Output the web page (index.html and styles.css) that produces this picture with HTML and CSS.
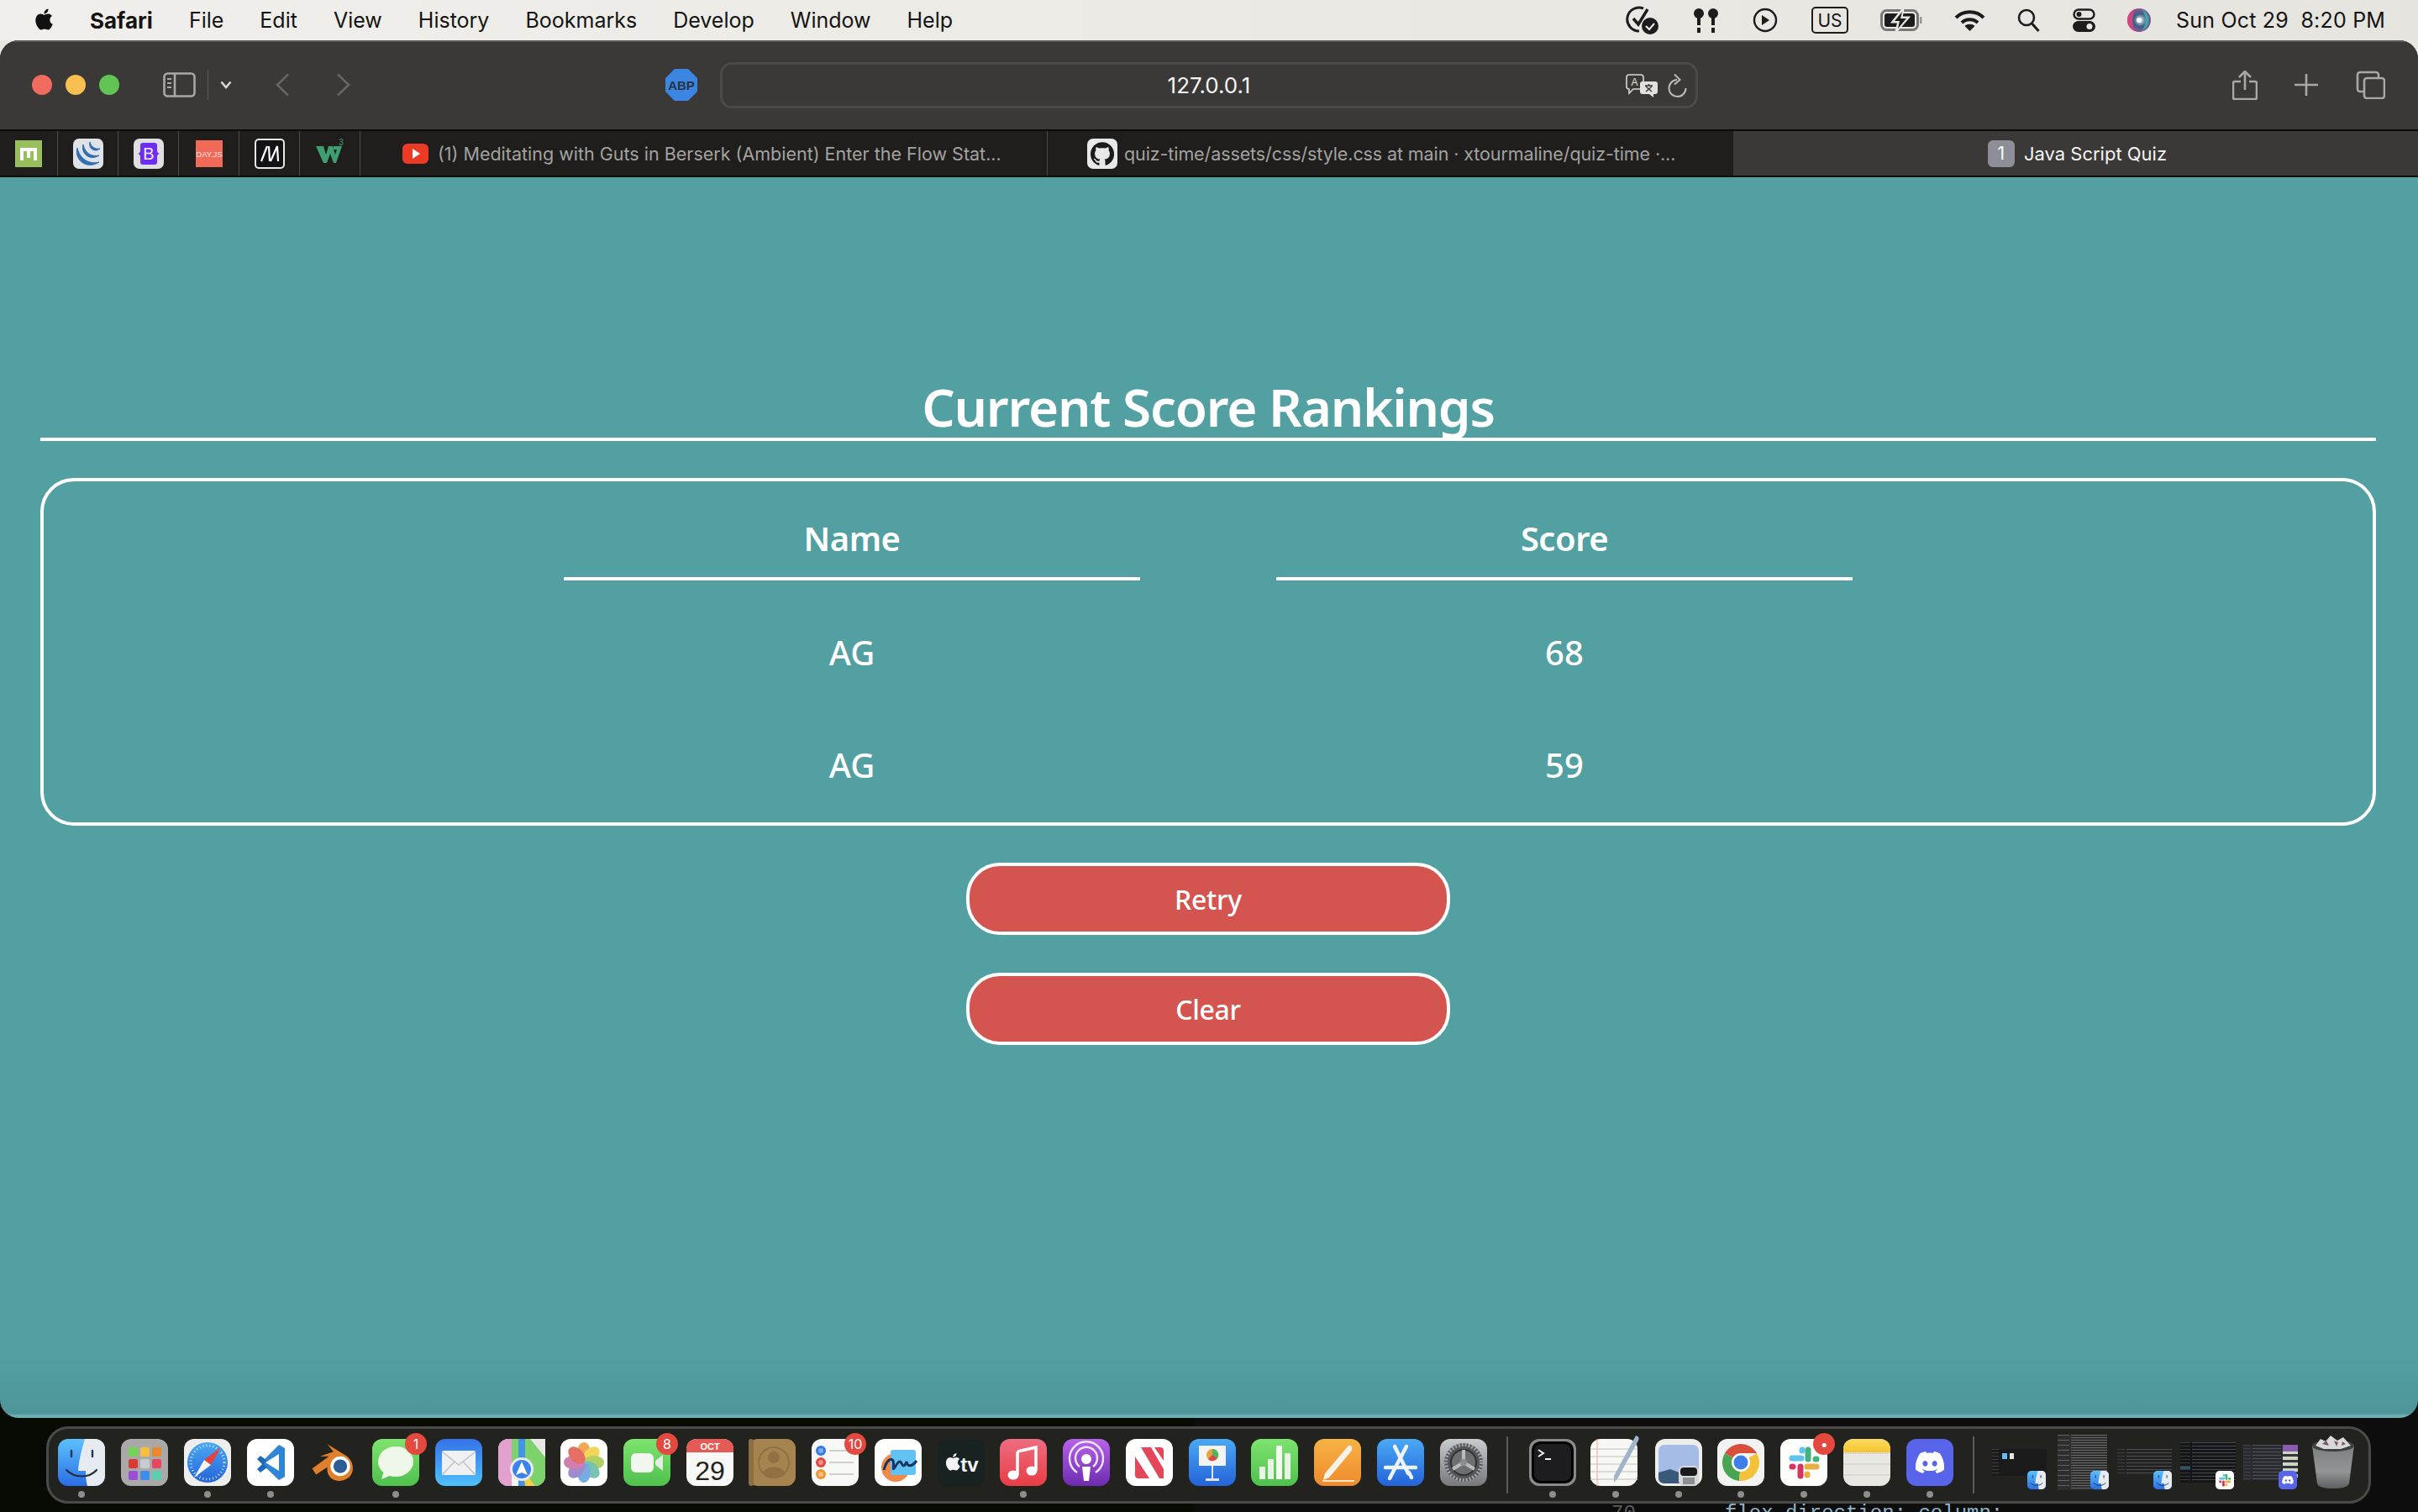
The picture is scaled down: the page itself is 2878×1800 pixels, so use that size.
FILE: index.html
```html
<!DOCTYPE html>
<html lang="en">
<head>
    <meta charset="UTF-8">
    <title>Java Script Quiz</title>
    <link rel="stylesheet" href="styles.css">
</head>
<body>
    <!-- shared icons -->
    <svg class="sprites" xmlns="http://www.w3.org/2000/svg">
        <defs>
            <linearGradient id="gFinder" x1="0" y1="0" x2="0" y2="1"><stop offset="0" stop-color="#5cc1fb"/><stop offset="1" stop-color="#2a6ee6"/></linearGradient>
            <linearGradient id="gBlue" x1="0" y1="0" x2="0" y2="1"><stop offset="0" stop-color="#4aa9f5"/><stop offset="1" stop-color="#2463d8"/></linearGradient>
            <linearGradient id="gGreen" x1="0" y1="0" x2="0" y2="1"><stop offset="0" stop-color="#7ee36f"/><stop offset="1" stop-color="#4fc14d"/></linearGradient>
            <linearGradient id="gMail" x1="0" y1="0" x2="0" y2="1"><stop offset="0" stop-color="#3572e8"/><stop offset="1" stop-color="#4fc0fb"/></linearGradient>
            <linearGradient id="gMusic" x1="0" y1="0" x2="0" y2="1"><stop offset="0" stop-color="#ee6d80"/><stop offset="1" stop-color="#e83d45"/></linearGradient>
            <linearGradient id="gPod" x1="0" y1="0" x2="0" y2="1"><stop offset="0" stop-color="#b664ea"/><stop offset="1" stop-color="#6d2bb0"/></linearGradient>
            <linearGradient id="gPages" x1="0" y1="0" x2="0" y2="1"><stop offset="0" stop-color="#f7b344"/><stop offset="1" stop-color="#ef8a2e"/></linearGradient>
            <linearGradient id="gGear" x1="0" y1="0" x2="0" y2="1"><stop offset="0" stop-color="#c9cccf"/><stop offset="1" stop-color="#77797c"/></linearGradient>
            <linearGradient id="gTrash" x1="0" y1="0" x2="0" y2="1"><stop offset="0" stop-color="#7d7e7f"/><stop offset=".6" stop-color="#949596"/><stop offset="1" stop-color="#5e5f60"/></linearGradient>
            <linearGradient id="gNotes" x1="0" y1="0" x2="0" y2="1"><stop offset="0" stop-color="#fbdc5f"/><stop offset="1" stop-color="#f7c431"/></linearGradient>
            <radialGradient id="gSiri" cx=".55" cy=".5" r=".6"><stop offset="0" stop-color="#e8f2f5"/><stop offset=".45" stop-color="#3d5f86"/><stop offset="1" stop-color="#b94d96"/></radialGradient>
            <symbol id="apple" viewBox="0 0 24 24"><path d="M12.152 6.896c-.948 0-2.415-1.078-3.96-1.040-2.040.027-3.910 1.183-4.961 3.014-2.117 3.675-.546 9.103 1.519 12.090 1.013 1.454 2.208 3.090 3.792 3.039 1.520-.065 2.090-.987 3.935-.987 1.831 0 2.350.987 3.960.948 1.637-.026 2.676-1.480 3.676-2.948 1.156-1.688 1.636-3.325 1.662-3.415-.039-.013-3.182-1.221-3.220-4.857-.026-3.040 2.480-4.494 2.597-4.559-1.429-2.090-3.623-2.324-4.390-2.376-2-.156-3.675 1.090-4.610 1.090zM15.530 3.830c.843-1.012 1.400-2.427 1.245-3.830-1.207.052-2.662.805-3.532 1.818-.78.896-1.454 2.338-1.273 3.714 1.338.104 2.715-.688 3.559-1.701"/></symbol>
            <symbol id="finder" viewBox="0 0 56 56">
                <rect width="56" height="56" rx="12" fill="url(#gFinder)"/>
                <path d="M32 0H44a12 12 0 0 1 12 12V44a12 12 0 0 1-12 12H35C33 48 33 42 33 38H24C25 24 29 10 32 0Z" fill="#e6ebf2"/>
                <path d="M16 14v7M41 14v7" stroke="#26364e" stroke-width="2.400" stroke-linecap="round"/>
                <path d="M10 37C20 47 37 47 46 37" stroke="#1f2c40" stroke-width="2.200" fill="none" stroke-linecap="round"/>
            </symbol>
            <symbol id="slack" viewBox="0 0 56 56">
                <rect width="56" height="56" rx="12" fill="#fdfdfc"/>
                <g fill="none" stroke-width="7" stroke-linecap="round">
                    <path d="M14 23H25" stroke="#5fc3ea"/><path d="M26 13v1" stroke="#5fc3ea"/>
                    <path d="M33 13V24" stroke="#44b27f"/><path d="M43 24h-1" stroke="#44b27f"/>
                    <path d="M32 33H43" stroke="#e5b03f"/><path d="M32 43v-1" stroke="#e5b03f"/>
                    <path d="M24 33V44" stroke="#d9345f"/><path d="M14 33h1" stroke="#d9345f"/>
                </g>
            </symbol>
            <symbol id="discord" viewBox="0 0 56 56">
                <rect width="56" height="56" rx="12" fill="#5865ea"/>
                <g transform="translate(11 11) scale(1.420)"><path fill="#fff" d="M20.317 4.3698a19.7913 19.7913 0 00-4.8851-1.5152.0741.0741 0 00-.0785.0371c-.211.3753-.4447.8648-.6083 1.2495-1.8447-.2762-3.68-.2762-5.4868 0-.1636-.3933-.4058-.8742-.6177-1.2495a.077.077 0 00-.0785-.037 19.7363 19.7363 0 00-4.8852 1.515.0699.0699 0 00-.0321.0277C.5334 9.0458-.319 13.5799.0992 18.0578a.0824.0824 0 00.0312.0561c2.0528 1.5076 4.0413 2.4228 5.9929 3.0294a.0777.0777 0 00.0842-.0276c.4616-.6304.8731-1.2952 1.226-1.9942a.076.076 0 00-.0416-.1057c-.6528-.2476-1.2743-.5495-1.8722-.8923a.077.077 0 01-.0076-.1277c.1258-.0943.2517-.1923.3718-.2914a.0743.0743 0 01.0776-.0105c3.9278 1.7933 8.18 1.7933 12.0614 0a.0739.0739 0 01.0785.0095c.1202.099.246.1981.3728.2924a.077.077 0 01-.0066.1276 12.2986 12.2986 0 01-1.873.8914.0766.0766 0 00-.0407.1067c.3604.698.7719 1.3628 1.225 1.9932a.076.076 0 00.0842.0286c1.961-.6067 3.9495-1.5219 6.0023-3.0294a.077.077 0 00.0313-.0552c.5004-5.177-.8382-9.6739-3.5485-13.6604a.061.061 0 00-.0312-.0286zM8.02 15.3312c-1.1825 0-2.1569-1.0857-2.1569-2.419 0-1.3332.9555-2.4189 2.157-2.4189 1.2108 0 2.1757 1.0952 2.1568 2.419 0 1.3332-.9555 2.4189-2.1569 2.4189zm7.9748 0c-1.1825 0-2.1569-1.0857-2.1569-2.419 0-1.3332.9554-2.4189 2.1569-2.4189 1.2108 0 2.1757 1.0952 2.1568 2.419 0 1.3332-.946 2.4189-2.1568 2.4189Z"/></g>
            </symbol>
        </defs>
    </svg>

    <header class="menubar">
        <svg class="apple-logo" width="25" height="30"><use href="#apple"/></svg>
        <nav class="menu-items">
            <span class="menu-app">Safari</span>
            <span>File</span>
            <span>Edit</span>
            <span>View</span>
            <span>History</span>
            <span>Bookmarks</span>
            <span>Develop</span>
            <span>Window</span>
            <span>Help</span>
        </nav>
        <div class="status-items">
            <svg width="43" height="36" viewBox="0 0 43 36" fill="none" stroke="#1c1c1c" stroke-width="3"><path d="M22 4A14 14 0 1 0 17 31"/><path d="M10 16l6 7L27 5" stroke-width="3.500"/><circle cx="30" cy="25" r="10" fill="#1c1c1c" stroke="none"/><path d="M25 25l4 4 6-7" stroke="#eee" stroke-width="2"/></svg>
            <svg width="33" height="32" viewBox="0 0 33 32" fill="#1c1c1c"><circle cx="7" cy="8" r="6"/><circle cx="24" cy="8" r="6"/><rect x="5" y="12" width="4" height="10"/><rect x="22" y="12" width="4" height="10"/><rect x="5" y="25" width="4" height="6"/><rect x="22" y="25" width="4" height="6"/></svg>
            <svg width="32" height="30" viewBox="0 0 32 30" fill="none"><circle cx="15" cy="15" r="13" stroke="#1c1c1c" stroke-width="2.400"/><path d="M11 9l9 6-9 6Z" fill="#1c1c1c"/></svg>
            <span class="input-box">US</span>
            <svg width="50" height="26" viewBox="0 0 50 26"><rect x="1.500" y="1.500" width="43" height="23" rx="6" fill="none" stroke="#777" stroke-width="3"/><rect x="5" y="5" width="36" height="16" rx="3" fill="#1c1c1c"/><rect x="47" y="9" width="2.500" height="8" fill="#999"/><path d="M27 0L15 15h7l-3 11L33 10h-8Z" fill="#e9e7e2" stroke="#e9e7e2" stroke-width="3"/><path d="M26 3L17 14h6l-2 9L31 11h-7Z" fill="#1c1c1c"/></svg>
            <svg width="37" height="26" viewBox="0 0 37 26" fill="none" stroke="#1c1c1c" stroke-width="4"><path d="M2 10C11 1 26 1 35 10"/><path d="M9 16C14 11 23 11 28 16"/><path d="M18.500 26l-6-6C15 17 22 17 24.500 20Z" fill="#1c1c1c" stroke="none"/></svg>
            <svg width="28" height="28" viewBox="0 0 28 28" fill="none" stroke="#1c1c1c" stroke-width="2.600"><circle cx="11" cy="11" r="9"/><path d="M17.500 18l8 9" stroke-width="3"/></svg>
            <svg width="27" height="28" viewBox="0 0 27 28"><rect x="1.500" y="1.500" width="24" height="11" rx="5.500" fill="none" stroke="#1c1c1c" stroke-width="2.400"/><circle cx="7.500" cy="7" r="3" fill="#1c1c1c"/><rect y="15" width="27" height="13" rx="6.500" fill="#1c1c1c"/><circle cx="20" cy="21.500" r="3.500" fill="#e9e7e2"/></svg>
            <svg width="28" height="28" viewBox="0 0 28 28"><circle cx="14" cy="14" r="14" fill="url(#gSiri)"/><path d="M0 14A14 14 0 0 0 9 27C5 20 5 8 9 1A14 14 0 0 0 0 14Z" fill="#d2457f"/><path d="M17 1C23 8 23 20 17 27A14 14 0 0 0 17 1Z" fill="#3ea5a8"/><circle cx="14" cy="14" r="3" fill="#fff"/></svg>
            <span class="clock">Sun Oct 29&nbsp; 8:20 PM</span>
        </div>
    </header>

    <div class="window">
        <div class="toolbar">
            <div class="lights">
                <i class="light light-red"></i>
                <i class="light light-yellow"></i>
                <i class="light light-green"></i>
            </div>
            <svg class="tool-sidebar" width="39" height="30" viewBox="0 0 39 30" fill="none" stroke="#a9a8a6" stroke-width="2.600"><rect x="1.500" y="1.500" width="36" height="27" rx="4"/><path d="M14 2v26"/><path d="M5 8h5M5 13h5M5 18h5" stroke-width="2"/></svg>
            <i class="tool-divider"></i>
            <svg class="tool-chevron" width="14" height="10" viewBox="0 0 14 10" fill="none" stroke="#d8d7d5" stroke-width="2.600"><path d="M1.500 1.500L7 8l5.500-6.500"/></svg>
            <svg class="tool-back" width="17" height="28" viewBox="0 0 17 28" fill="none" stroke="#666563" stroke-width="2.600"><path d="M15 1.500L2 14l13 12.500"/></svg>
            <svg class="tool-forward" width="17" height="28" viewBox="0 0 17 28" fill="none" stroke="#666563" stroke-width="2.600"><path d="M2 1.500L15 14 2 26.500"/></svg>
            <svg class="tool-abp" width="38" height="38" viewBox="0 0 38 38"><path d="M11 0H27L38 11V27L27 38H11L0 27V11Z" fill="#3b86e2"/><text x="19" y="25" text-anchor="middle" class="abp-text">ABP</text></svg>
            <div class="url-bar">
                <span class="url-text">127.0.0.1</span>
                <svg class="url-translate" width="38" height="28" viewBox="0 0 38 28"><path d="M4 1H18a3 3 0 0 1 3 3V15a3 3 0 0 1-3 3H9L4 23V18a3 3 0 0 1-3-3V4a3 3 0 0 1 3-3Z" fill="#3a3937" stroke="#d8d7d5" stroke-width="1.600"/><text x="10.500" y="14" text-anchor="middle" class="translate-a">A</text><path d="M20 9H35a3 3 0 0 1 3 3V21a3 3 0 0 1-3 3H33V28L28 24H20a3 3 0 0 1-3-3V12a3 3 0 0 1 3-3Z" fill="#e2e1df"/><path d="M23 14h9M27.500 12v2M24 21l7-6M31 21l-7-6" stroke="#333" stroke-width="1.400"/></svg>
                <svg class="url-reload" width="24" height="30" viewBox="0 0 24 30" fill="none" stroke="#bdbcba" stroke-width="2"><path d="M11 8A10 10 0 1 0 21.500 18"/><path d="M8 1.500L14.500 8 8 13.500"/></svg>
            </div>
            <svg class="tool-share" width="30" height="35" viewBox="0 0 30 35" fill="none" stroke="#a9a8a6" stroke-width="2.600"><path d="M15 1v22M8 8l7-7 7 7"/><path d="M10 13H3a2 2 0 0 0-2 2v17a2 2 0 0 0 2 2h24a2 2 0 0 0 2-2V15a2 2 0 0 0-2-2h-7"/></svg>
            <svg class="tool-plus" width="28" height="26" viewBox="0 0 28 26" stroke="#a9a8a6" stroke-width="2.600"><path d="M14 0v26M0 13h28"/></svg>
            <svg class="tool-tabs" width="35" height="34" viewBox="0 0 35 34" fill="none" stroke="#a9a8a6" stroke-width="2.600"><path d="M27 8V5a3 3 0 0 0-3-3H5a3 3 0 0 0-3 3v17a3 3 0 0 0 3 3h4"/><rect x="10" y="9" width="24" height="24" rx="3"/></svg>
        </div>

        <div class="tabbar">
            <div class="pinned">
                <svg width="32" height="32" viewBox="0 0 32 32"><rect width="32" height="32" fill="#97bf5b"/><path d="M6 24V9H26V24H22V13H18V21H14V13H10V24Z" fill="#fff"/></svg>
            </div>
            <div class="pinned">
                <svg width="36" height="36" viewBox="0 0 36 36"><rect width="36" height="36" rx="7" fill="#dfe2e6"/><path d="M5 11C1 24 15 38 31 28C20 31 8 25 5 11ZM12 7C9 18 20 27 31 20C23 22 14 18 12 7ZM20 4C18 12 26 17 32 12C27 13 21 10 20 4Z" fill="#2f6fb2" stroke="#2f6fb2" stroke-width="1"/></svg>
            </div>
            <div class="pinned">
                <svg width="36" height="36" viewBox="0 0 36 36"><rect width="36" height="36" rx="7" fill="#dfdfe1"/><path d="M11 5H25a3 3 0 0 1 3 3V14C28 16 29 17.500 31 18C29 18.500 28 20 28 22V28a3 3 0 0 1-3 3H11a3 3 0 0 1-3-3V22C8 20 7 18.500 5 18C7 17.500 8 16 8 14V8a3 3 0 0 1 3-3Z" fill="#6f2cf3"/><text x="18" y="25" text-anchor="middle" class="boot-text">B</text></svg>
            </div>
            <div class="pinned">
                <svg width="32" height="32" viewBox="0 0 32 32"><rect width="32" height="32" fill="#f16a58"/><text x="16" y="19.500" text-anchor="middle" class="day-text">DAY.JS</text></svg>
            </div>
            <div class="pinned">
                <svg width="36" height="36" viewBox="0 0 36 36"><rect width="36" height="36" rx="5" fill="#e8e8e8"/><rect x="2" y="2" width="32" height="32" rx="3" fill="#131316"/><path d="M8 27L15 9M17 9L18 27M19 27L27 9L28 27" fill="none" stroke="#fff" stroke-width="2.200"/></svg>
            </div>
            <div class="pinned">
                <svg width="36" height="36" viewBox="0 0 36 36"><path d="M1 9H10L13 19L16 9H21L24 19L26 13H22V9H32L25 29H22L18 18L14 29H10Z" fill="#3f9e70"/><text x="31" y="8" text-anchor="middle" class="w3-text">3</text></svg>
            </div>
            <div class="tab tab-youtube">
                <svg width="31" height="24" viewBox="0 0 31 24"><rect width="31" height="24" rx="6" fill="#ec3b24"/><path d="M12 6l9 6-9 6Z" fill="#fff"/></svg>
                <span>(1) Meditating with Guts in Berserk (Ambient) Enter the Flow Stat...</span>
            </div>
            <div class="tab tab-github">
                <svg width="36" height="36" viewBox="0 0 36 36"><rect width="36" height="36" rx="7" fill="#e8e8e8"/><g transform="translate(4 4) scale(1.170)"><path fill="#1b1b1b" d="M12 .297c-6.630 0-12 5.373-12 12 0 5.303 3.438 9.800 8.205 11.385.6.113.82-.258.82-.577 0-.285-.01-1.040-.015-2.040-3.338.724-4.042-1.610-4.042-1.610C4.422 18.070 3.633 17.700 3.633 17.700c-1.087-.744.084-.729.084-.729 1.205.084 1.838 1.236 1.838 1.236 1.070 1.835 2.809 1.305 3.495.998.108-.776.417-1.305.76-1.605-2.665-.3-5.466-1.332-5.466-5.930 0-1.310.465-2.380 1.235-3.220-.135-.303-.54-1.523.105-3.176 0 0 1.005-.322 3.300 1.230.96-.267 1.980-.399 3-.405 1.020.006 2.040.138 3 .405 2.280-1.552 3.285-1.230 3.285-1.230.645 1.653.24 2.873.12 3.176.765.84 1.230 1.910 1.230 3.220 0 4.610-2.805 5.625-5.475 5.920.42.36.81 1.096.81 2.220 0 1.606-.015 2.896-.015 3.286 0 .315.21.69.825.57C20.565 22.092 24 17.592 24 12.297c0-6.627-5.373-12-12-12"/></g></svg>
                <span class="tab-title-tight">quiz-time/assets/css/style.css at main · xtourmaline/quiz-time ·...</span>
            </div>
            <div class="tab tab-active">
                <span class="tab-number">1</span>
                <span>Java Script Quiz</span>
            </div>
        </div>

        <main class="page">
            <h1 class="page-title">Current Score Rankings</h1>
            <section class="score-box">
                <table class="score-table">
                    <thead>
                        <tr>
                            <th>Name</th>
                            <th>Score</th>
                        </tr>
                    </thead>
                    <tbody>
                        <tr>
                            <td>AG</td>
                            <td>68</td>
                        </tr>
                        <tr>
                            <td>AG</td>
                            <td>59</td>
                        </tr>
                    </tbody>
                </table>
            </section>
            <button class="action-button">Retry</button>
            <button class="action-button">Clear</button>
        </main>
    </div>

    <div class="code-behind"><span class="code-num">70</span><span class="code-line">flex-direction: column;</span></div>

    <footer class="dock">
        <div class="dock-item"><svg width="56" height="56"><use href="#finder"/></svg><i class="dot"></i></div>
        <div class="dock-item">
            <svg width="56" height="56" viewBox="0 0 56 56"><rect width="56" height="56" rx="12" fill="#aaa9a8"/><rect x="9" y="10" width="11" height="11" rx="2" fill="#72d653"/><rect x="23" y="10" width="11" height="11" rx="2" fill="#f7bd3c"/><rect x="37" y="10" width="11" height="11" rx="2" fill="#e8882f"/><rect x="9" y="24" width="11" height="11" rx="2" fill="#d93b33"/><rect x="23" y="24" width="11" height="11" rx="2" fill="#c7cccf"/><rect x="37" y="24" width="11" height="11" rx="2" fill="#e8455e"/><rect x="9" y="38" width="11" height="11" rx="2" fill="#9a4fd8"/><rect x="23" y="38" width="11" height="11" rx="2" fill="#3d8cf0"/><rect x="37" y="38" width="11" height="11" rx="2" fill="#5cd0ae"/></svg>
        </div>
        <div class="dock-item">
            <svg width="56" height="56" viewBox="0 0 56 56"><rect width="56" height="56" rx="12" fill="#eeeeee"/><circle cx="28" cy="28" r="24" fill="url(#gBlue)"/><circle cx="28" cy="28" r="20" fill="none" stroke="#d5e6fa" stroke-width="3" stroke-dasharray="1 3"/><path d="M44 10L24 25l8 6Z" fill="#e8423a"/><path d="M12 46l12-21 8 6Z" fill="#f4f4f4"/></svg>
            <i class="dot"></i>
        </div>
        <div class="dock-item">
            <svg width="56" height="56" viewBox="0 0 56 56"><rect width="56" height="56" rx="12" fill="#fff"/><path d="M38 7L45 11V45L38 49L18 30L20 25Z" fill="#2f86d6"/><path d="M38 18V38L22 28Z" fill="#fff"/><path d="M12 24L16 20L24 26L20 30L24 34 L16 40L12 36L18 30Z" fill="#1f6ab8"/></svg>
            <i class="dot"></i>
        </div>
        <div class="dock-item">
            <svg width="56" height="56" viewBox="0 0 62 56"><path d="M4 36L26 20H14L32 14L24 4L50 20C62 30 60 50 42 52C30 54 22 44 24 34L9 44Z" fill="#e17f2b"/><circle cx="41" cy="33" r="13" fill="#fff"/><circle cx="41" cy="33" r="9" fill="#2f5c94"/></svg>
        </div>
        <div class="dock-item">
            <svg width="56" height="56" viewBox="0 0 56 56"><rect width="56" height="56" rx="12" fill="url(#gGreen)"/><ellipse cx="28" cy="27" rx="21" ry="18" fill="#eef7e8"/><path d="M14 38L11 48L23 43Z" fill="#eef7e8"/></svg>
            <i class="dot"></i>
            <b class="badge">1</b>
        </div>
        <div class="dock-item">
            <svg width="56" height="56" viewBox="0 0 56 56"><rect width="56" height="56" rx="12" fill="url(#gMail)"/><rect x="8" y="14" width="40" height="29" rx="2" fill="#eff0f2"/><path d="M8 15L28 31 48 15M8 43L23 27M48 43L33 27" fill="none" stroke="#bfc3c9" stroke-width="1.400"/></svg>
        </div>
        <div class="dock-item">
            <svg width="56" height="56" viewBox="0 0 56 56"><rect width="56" height="56" rx="12" fill="#f3f3f0"/><path d="M0 12A12 12 0 0 1 12 0H16V56H12A12 12 0 0 1 0 44Z" fill="#e2a0cf"/><path d="M16 0H56V44A12 12 0 0 1 44 56H34L16 40Z" fill="#7ed26c"/><path d="M38 0H56V22Z" fill="#e7e7e4"/><path d="M24 0H32V56H24Z" fill="#4294ea"/><path d="M30 38L44 56H32Z" fill="#f6cf43"/><circle cx="28" cy="36" r="14" fill="#e9ebef"/><circle cx="28" cy="36" r="11" fill="#3b83ec"/><path d="M28 27L35 43L28 40L21 43Z" fill="#fff"/></svg>
        </div>
        <div class="dock-item">
            <svg width="56" height="56" viewBox="0 0 56 56"><rect width="56" height="56" rx="12" fill="#fff"/><g opacity=".85"><ellipse cx="28" cy="16" rx="8" ry="12" fill="#f09b37"/><ellipse cx="28" cy="16" rx="8" ry="12" fill="#f3cd3d" transform="rotate(45 28 28)"/><ellipse cx="28" cy="16" rx="8" ry="12" fill="#a5c74b" transform="rotate(90 28 28)"/><ellipse cx="28" cy="16" rx="8" ry="12" fill="#61b8a5" transform="rotate(135 28 28)"/><ellipse cx="28" cy="16" rx="8" ry="12" fill="#5e9fdc" transform="rotate(180 28 28)"/><ellipse cx="28" cy="16" rx="8" ry="12" fill="#8e78c6" transform="rotate(225 28 28)"/><ellipse cx="28" cy="16" rx="8" ry="12" fill="#c9679f" transform="rotate(270 28 28)"/><ellipse cx="28" cy="16" rx="8" ry="12" fill="#e2574b" transform="rotate(315 28 28)"/></g></svg>
        </div>
        <div class="dock-item">
            <svg width="56" height="56" viewBox="0 0 56 56"><rect width="56" height="56" rx="12" fill="url(#gGreen)"/><rect x="9" y="17" width="27" height="23" rx="6" fill="#f1f6ee"/><path d="M38 26L47 19V38L38 31Z" fill="#e4efdf"/></svg>
            <b class="badge">8</b>
        </div>
        <div class="dock-item">
            <svg width="56" height="56" viewBox="0 0 56 56"><rect width="56" height="56" rx="12" fill="#f8f8f6"/><path d="M0 16V12A12 12 0 0 1 12 0H44A12 12 0 0 1 56 12V16Z" fill="#e35b54"/><text x="28" y="13" text-anchor="middle" class="cal-month">OCT</text><text x="28" y="49" text-anchor="middle" class="cal-day">29</text></svg>
        </div>
        <div class="dock-item">
            <svg width="56" height="56" viewBox="0 0 56 56"><rect width="56" height="56" rx="11" fill="#a5844f"/><rect x="0" y="0" width="6" height="56" rx="3" fill="#8d6f42"/><circle cx="30" cy="28" r="18" fill="none" stroke="#8f7144" stroke-width="2"/><circle cx="30" cy="22" r="7" fill="#8f7144"/><path d="M17 41C19 31 41 31 43 41C37 47 23 47 17 41Z" fill="#8f7144"/></svg>
        </div>
        <div class="dock-item">
            <svg width="56" height="56" viewBox="0 0 56 56"><rect width="56" height="56" rx="12" fill="#f8f8f6"/><circle cx="11" cy="14" r="6" fill="#3478e8"/><circle cx="11" cy="28" r="6" fill="#e2473f"/><circle cx="11" cy="42" r="6" fill="#ee9533"/><circle cx="11" cy="14" r="3" fill="#fff" opacity=".4"/><circle cx="11" cy="28" r="3" fill="#fff" opacity=".4"/><circle cx="11" cy="42" r="3" fill="#fff" opacity=".4"/><path d="M21 14H50M21 28H50M21 42H50" stroke="#cfcfcf" stroke-width="2"/></svg>
            <b class="badge">10</b>
        </div>
        <div class="dock-item">
            <svg width="56" height="56" viewBox="0 0 56 56"><rect width="56" height="56" rx="12" fill="#fff"/><circle cx="25" cy="34" r="17" fill="#f08a4a"/><rect x="19" y="13" width="30" height="30" rx="3" fill="#62c3f2"/><path d="M11 37C14 25 20 22 22 26C24 32 20 39 24 34C28 27 30 25 32 29C34 33 36 33 38 27C39 33 44 34 50 26" fill="none" stroke="#16365f" stroke-width="3"/></svg>
        </div>
        <div class="dock-item">
            <svg width="56" height="56" viewBox="0 0 56 56"><rect width="56" height="56" rx="12" fill="#182220"/><g transform="translate(8 17) scale(.86)" fill="#f2f2f2"><use href="#apple" width="24" height="24"/></g><text x="38" y="39" text-anchor="middle" class="tv-text">tv</text></svg>
        </div>
        <div class="dock-item">
            <svg width="56" height="56" viewBox="0 0 56 56"><rect width="56" height="56" rx="12" fill="url(#gMusic)"/><path d="M21 15L43 10V37" fill="none" stroke="#fff" stroke-width="3.600"/><path d="M21 15V43" stroke="#fff" stroke-width="3.600"/><ellipse cx="16" cy="43" rx="6.500" ry="5.500" fill="#fff"/><ellipse cx="38" cy="38" rx="6.500" ry="5.500" fill="#fff"/></svg>
            <i class="dot"></i>
        </div>
        <div class="dock-item">
            <svg width="56" height="56" viewBox="0 0 56 56"><rect width="56" height="56" rx="12" fill="url(#gPod)"/><g fill="none" stroke="#efe3fa" stroke-width="2.400"><path d="M17 40A20 20 0 1 1 39 40"/><path d="M20 33A13 13 0 1 1 36 33"/></g><circle cx="28" cy="24" r="6" fill="#fff"/><path d="M23 33H33L31 50H25Z" fill="#fff"/></svg>
        </div>
        <div class="dock-item">
            <svg width="56" height="56" viewBox="0 0 56 56"><rect width="56" height="56" rx="12" fill="#fff"/><path d="M11 21L28 47H15Q11 47 11 43ZM18 10H30L45 36V47H40Z" fill="#e5475a"/><path d="M34 10H41Q45 10 45 14V26Z" fill="#e5475a"/></svg>
        </div>
        <div class="dock-item">
            <svg width="56" height="56" viewBox="0 0 56 56"><rect width="56" height="56" rx="12" fill="url(#gBlue)"/><rect x="12" y="8" width="32" height="24" fill="#f3f3f1"/><circle cx="28" cy="19" r="7" fill="#e9a23b"/><path d="M28 19V12A7 7 0 0 1 34 23Z" fill="#4bb860"/><path d="M28 19L34 23A7 7 0 0 1 23 24Z" fill="#d84b4b"/><path d="M28 32V50" stroke="#e2e4e8" stroke-width="2"/><rect x="20" y="47" width="16" height="3" fill="#e2e4e8"/></svg>
        </div>
        <div class="dock-item">
            <svg width="56" height="56" viewBox="0 0 56 56"><rect width="56" height="56" rx="12" fill="url(#gGreen)"/><rect x="10" y="33" width="7" height="15" fill="#e9f5e4"/><rect x="20" y="24" width="7" height="24" fill="#e9f5e4"/><rect x="30" y="8" width="7" height="40" fill="#f4faf1"/><rect x="40" y="17" width="7" height="31" fill="#e9f5e4"/></svg>
        </div>
        <div class="dock-item">
            <svg width="56" height="56" viewBox="0 0 56 56"><rect width="56" height="56" rx="12" fill="url(#gPages)"/><path d="M41 8C46 7 46 12 44 15L18 46L11 49L13 41Z" fill="#f7f3e8"/><path d="M10 50H48" stroke="#f7e6c8" stroke-width="2"/></svg>
        </div>
        <div class="dock-item">
            <svg width="56" height="56" viewBox="0 0 56 56"><rect width="56" height="56" rx="12" fill="url(#gBlue)"/><g stroke="#eef4fd" stroke-width="4.500" stroke-linecap="round" fill="none"><path d="M21 9L37 41"/><path d="M35 9L15 47"/><path d="M10 34H46"/><path d="M38 40L41 46"/></g></svg>
        </div>
        <div class="dock-item">
            <svg width="56" height="56" viewBox="0 0 56 56"><rect width="56" height="56" rx="12" fill="url(#gGear)"/><circle cx="28" cy="28" r="23" fill="#55575a"/><circle cx="28" cy="28" r="21" fill="none" stroke="#a6a8ab" stroke-width="4" stroke-dasharray="2 2"/><circle cx="28" cy="28" r="15" fill="#6d6f72" stroke="#2f3032" stroke-width="2"/><path d="M28 28V13M28 28L15 36M28 28L41 36" stroke="#b9bbbe" stroke-width="4"/><circle cx="28" cy="28" r="4" fill="#8b8d90"/></svg>
        </div>
        <i class="dock-divider"></i>
        <div class="dock-item">
            <svg width="56" height="56" viewBox="0 0 56 56"><rect width="56" height="56" rx="12" fill="#8a8a8a"/><rect x="3" y="3" width="50" height="50" rx="10" fill="#000"/><rect x="6" y="6" width="44" height="44" rx="8" fill="#1d1d1f"/><path d="M11 13l6 4-6 4" fill="none" stroke="#f2f2f2" stroke-width="2"/><path d="M19 24h7" stroke="#f2f2f2" stroke-width="2"/></svg>
            <i class="dot"></i>
        </div>
        <div class="dock-item">
            <svg width="60" height="60" viewBox="0 0 60 60" class="textedit-icon"><rect y="4" width="56" height="56" rx="12" fill="#f7f7f4"/><path d="M0 16H56M0 25H56M0 34H56M0 43H56M0 52H56" stroke="#d3d3d0" stroke-width="1.400"/><path d="M8 4V60" stroke="#eea7a0" stroke-width="1"/><path d="M54 0C58 1 58 3 57 6L33 50L28 56L28 48Z" fill="#9fb4c9"/></svg>
            <i class="dot"></i>
        </div>
        <div class="dock-item">
            <svg width="56" height="56" viewBox="0 0 56 56"><rect width="56" height="56" rx="12" fill="#ededea"/><rect x="4" y="7" width="48" height="46" rx="7" fill="#a5bce6"/><path d="M4 40L18 36 34 42 52 38V46Q52 53 45 53H11Q4 53 4 46Z" fill="#39587a"/><rect x="28" y="32" width="24" height="24" rx="6" fill="#d9d9d9"/><rect x="30" y="34" width="20" height="10" rx="4" fill="#1a1a1a"/><rect x="33" y="46" width="14" height="8" fill="#8a8f94"/></svg>
            <i class="dot"></i>
        </div>
        <div class="dock-item">
            <svg width="56" height="56" viewBox="0 0 56 56"><rect width="56" height="56" rx="12" fill="#f3f3f1"/><path d="M28 28L9 17A22 22 0 0 1 47 17H28Z" fill="#d94f3d"/><path d="M9 17A22 22 0 0 0 26 50L28 28Z" fill="#4aa552"/><path d="M47 17A22 22 0 0 1 26 50L28 28Z" fill="#f3c13a"/><circle cx="28" cy="28" r="11" fill="#fff"/><circle cx="28" cy="28" r="8.500" fill="#3d7fe8"/></svg>
            <i class="dot"></i>
        </div>
        <div class="dock-item">
            <svg width="56" height="56"><use href="#slack"/></svg>
            <i class="dot"></i>
            <b class="badge">•</b>
        </div>
        <div class="dock-item">
            <svg width="56" height="56" viewBox="0 0 56 56"><rect width="56" height="56" rx="12" fill="#e8e7e1"/><path d="M0 16V12A12 12 0 0 1 12 0H44A12 12 0 0 1 56 12V16Z" fill="url(#gNotes)"/><path d="M0 17H56" stroke="#b5b4ae" stroke-width="1" stroke-dasharray="1 1"/><path d="M0 30H56M0 43H56" stroke="#d6d5cf" stroke-width="1.500"/></svg>
            <i class="dot"></i>
        </div>
        <div class="dock-item">
            <svg width="56" height="56"><use href="#discord"/></svg>
            <i class="dot"></i>
        </div>
        <i class="dock-divider"></i>
        <div class="dock-item">
            <div class="thumb thumb-a"><span class="thumb-side"></span><span class="thumb-files"></span></div>
            <svg class="mini-icon" width="22" height="22"><use href="#finder"/></svg>
        </div>
        <div class="dock-item">
            <div class="thumb thumb-b"><span class="thumb-side"></span><span class="thumb-list"></span></div>
            <svg class="mini-icon" width="22" height="22"><use href="#finder"/></svg>
        </div>
        <div class="dock-item">
            <div class="thumb thumb-c"><span class="thumb-side"></span><span class="thumb-list"></span></div>
            <svg class="mini-icon" width="22" height="22"><use href="#finder"/></svg>
        </div>
        <div class="dock-item">
            <div class="thumb thumb-d"><span class="thumb-side"></span><span class="thumb-list"></span></div>
            <svg class="mini-icon" width="22" height="22"><use href="#slack"/></svg>
        </div>
        <div class="dock-item">
            <div class="thumb thumb-e"><span class="thumb-side"></span><span class="thumb-list"></span><span class="thumb-swatches"></span></div>
            <svg class="mini-icon" width="22" height="22"><use href="#discord"/></svg>
        </div>
        <div class="dock-item">
            <svg width="50" height="64" viewBox="0 0 50 64" class="trash"><path d="M0 13L6 58Q8 64 25 64Q42 64 44 58L50 13Z" fill="url(#gTrash)"/><ellipse cx="25" cy="13" rx="25" ry="7" fill="#3e3f40"/><path d="M4 13L10 5L16 8L22 1L30 7L37 3L46 13L34 17H14Z" fill="#d8d8d8"/><path d="M12 11l5-4 3 6ZM26 7l5 2-2 5ZM36 8l4 3-5 2Z" fill="#78566a"/></svg>
        </div>
    </footer>
</body>
</html>
```

FILE: styles.css
```css
* {
    box-sizing: border-box;
}

html, body {
    margin: 0;
    padding: 0;
}

body {
    position: relative;
    width: 2878px;
    height: 1800px;
    overflow: hidden;
    font-family: Inter, "Liberation Sans", sans-serif;
    background:
        linear-gradient(#e9e7e2 0, #e9e7e2 70px, transparent 70px),
        linear-gradient(90deg, #080a04 0, #080a04 1422px, #0d0d0d 1422px);
    background-color: #000;
}

.sprites {
    display: block;
    width: 0;
    height: 0;
}

/* menu bar */
.menubar {
    display: flex;
    align-items: center;
    height: 48px;
    padding: 0 39px 0 40px;
    background: linear-gradient(90deg, #f0efeb, #e6e4de);
    color: #141414;
    font-size: 25px;
}

.apple-logo {
    flex: none;
    margin-bottom: 3px;
    fill: #111;
}

.menu-items {
    display: flex;
    gap: 43px;
    margin-left: 42px;
}

.menu-app {
    font-size: 26px;
    font-weight: 700;
}

.status-items {
    display: flex;
    align-items: center;
    gap: 38px;
    margin-left: auto;
}

.input-box {
    display: flex;
    align-items: center;
    justify-content: center;
    width: 44px;
    height: 32px;
    border: 2px solid #1c1c1c;
    border-radius: 5px;
    font-size: 21px;
}

.clock {
    width: 249px;
    margin-left: -8px;
    letter-spacing: .2px;
    text-align: right;
    white-space: nowrap;
}

/* browser window */
.window {
    display: flex;
    flex-direction: column;
    height: 1640px;
    overflow: hidden;
    border-radius: 22px;
    background: #3a3937;
}

.toolbar {
    display: flex;
    align-items: center;
    flex: none;
    height: 106px;
    padding: 0 39px 2px 38px;
    border-top: 2px solid #5a5957;
    background: #3a3937;
}

.lights {
    display: flex;
    gap: 16px;
}

.light {
    width: 24px;
    height: 24px;
    border-radius: 50%;
}

.light-red {
    background: #f26b60;
}

.light-yellow {
    background: #f6bf4f;
}

.light-green {
    background: #61c554;
}

.tool-sidebar {
    margin-left: 52px;
}

.tool-divider {
    width: 1px;
    height: 36px;
    margin-left: 14px;
    background: #5c5b59;
}

.tool-chevron {
    margin-left: 14px;
}

.tool-back {
    margin-left: 52px;
}

.tool-forward {
    margin-left: 55px;
}

.tool-abp {
    margin-left: 375px;
}

.abp-text {
    font-family: "Liberation Sans", sans-serif;
    font-size: 15px;
    font-weight: 700;
    fill: #28333f;
}

.url-bar {
    position: relative;
    display: flex;
    align-items: center;
    justify-content: center;
    width: 1164px;
    height: 55px;
    margin-left: 27px;
    border: 3px solid #4b4a48;
    border-radius: 14px;
}

.url-text {
    color: #f4f4f4;
    font-size: 26px;
}

.url-translate {
    position: absolute;
    left: 1075px;
    top: 11px;
}

.url-reload {
    position: absolute;
    left: 1125px;
    top: 10px;
}

.tool-share {
    margin-left: auto;
}

.tool-plus {
    margin-left: 44px;
}

.tool-tabs {
    margin-left: 45px;
}

/* tabs */
.tabbar {
    display: flex;
    flex: none;
    height: 57px;
    border-top: 2px solid #0b0b0b;
    border-bottom: 2px solid #0b0b0b;
    background: #1f1e1d;
}

.pinned {
    display: flex;
    align-items: center;
    justify-content: center;
    flex: none;
    width: 72px;
    border-right: 1px solid #4a4948;
}

.pinned:first-child {
    width: 69px;
}

.boot-text {
    font-family: "Liberation Sans", sans-serif;
    font-size: 20px;
    fill: #efe8ff;
}

.day-text {
    font-family: "Liberation Sans", sans-serif;
    font-size: 9.500px;
    fill: #fbe4df;
}

.w3-text {
    font-family: "Liberation Sans", sans-serif;
    font-size: 10px;
    fill: #3f9e70;
}

.tab {
    display: flex;
    align-items: center;
    flex: none;
    color: #a3a2a0;
    font-size: 21.500px;
    white-space: nowrap;
}

.tab-youtube {
    width: 818px;
    gap: 11px;
    padding-left: 50px;
    border-right: 1px solid #4a4948;
}

.tab-github {
    width: 816px;
    gap: 8px;
    padding-left: 47px;
}

.tab-title-tight {
    letter-spacing: -.1px;
}

.tab-active {
    flex: 1;
    justify-content: center;
    gap: 11px;
    padding-left: 4px;
    background: #3a3937;
    color: #f4f4f4;
    font-size: 22px;
}

.tab-number {
    display: flex;
    align-items: center;
    justify-content: center;
    width: 32px;
    height: 32px;
    border-radius: 6px;
    background: #8e8e98;
    color: #fff;
    font-size: 21px;
}

/* quiz page */
.page {
    flex: 1;
    display: flex;
    flex-direction: column;
    align-items: center;
    padding: 0 50px 0 48px;
    color: #fff;
    font-family: "Noto Sans", "Open Sans", sans-serif;
    background: linear-gradient(#52a0a2 0, #52a0a2 1400px, #4e9599 1472px, #6eb1b3 1474px, #6eb1b3 1477px);
}

.page-title {
    align-self: stretch;
    margin: 239px 0 0;
    padding-bottom: 3px;
    border-bottom: 4px solid #fff;
    font-size: 62px;
    font-weight: 600;
    letter-spacing: -1.250px;
    line-height: 68px;
    text-align: center;
}

.score-box {
    align-self: stretch;
    display: flex;
    justify-content: center;
    height: 414px;
    margin-top: 44px;
    border: 4px solid #fff;
    border-radius: 40px;
}

.score-table {
    align-self: flex-start;
    border-collapse: separate;
    border-spacing: 162px 0;
}

.score-table th {
    width: 686px;
    height: 118px;
    padding: 20px 0 0;
    border-bottom: 4px solid #fff;
    font-size: 40px;
    font-weight: 600;
    letter-spacing: -.5px;
}

.score-table td {
    height: 134px;
    padding: 36px 0 0;
    font-size: 40px;
    font-weight: 500;
    text-align: center;
}

.action-button {
    display: block;
    width: 576px;
    height: 86px;
    margin-top: 44px;
    border: 4px solid #fff;
    border-radius: 40px;
    background: #d4544f;
    color: #fff;
    font-family: "Noto Sans", "Open Sans", sans-serif;
    font-size: 32px;
    font-weight: 500;
    letter-spacing: -.3px;
}

.action-button + .action-button {
    margin-top: 45px;
}

/* bits of the editor showing behind the dock */
.code-behind {
    position: absolute;
    left: 1918px;
    top: 1790px;
    display: flex;
    color: #8fb3c9;
    font-family: "Liberation Mono", monospace;
    font-size: 24px;
    line-height: 24px;
}

.code-num {
    width: 135px;
    color: #5b5b5b;
}

/* dock */
.dock {
    display: flex;
    align-items: flex-start;
    width: 2767px;
    height: 92px;
    margin: 10px 0 0 55px;
    padding: 12px 0 0 2px;
    border: 3px solid #4a4a46;
    border-radius: 26px;
    background: #22221f;
}

.dock-item {
    position: relative;
    display: flex;
    justify-content: center;
    flex: none;
    width: 74.740px;
    height: 56px;
}

.dot {
    position: absolute;
    left: 50%;
    top: 62px;
    width: 8px;
    height: 8px;
    margin-left: -4px;
    border-radius: 50%;
    background: #8d8d8b;
}

.badge {
    position: absolute;
    left: 50%;
    top: -7px;
    display: flex;
    align-items: center;
    justify-content: center;
    width: 26px;
    height: 26px;
    margin-left: 11px;
    border-radius: 50%;
    background: #e4493f;
    color: #fff;
    font-size: 16px;
    font-weight: 400;
}

.dock-divider {
    flex: none;
    width: 2px;
    height: 68px;
    margin: -3px 16px 0 14px;
    background: #5c5c59;
}

.textedit-icon {
    flex: none;
    margin-top: -4px;
}

.thumb {
    flex: none;
    display: flex;
    gap: 2px;
    background: #1b1b1b;
}

.thumb-a {
    width: 66px;
    height: 32px;
    margin-top: 12px;
}

.thumb-side {
    flex: none;
    width: 9px;
    background: repeating-linear-gradient(#4a4a4a 0 1px, transparent 1px 4px);
    opacity: .7;
}

.thumb-files {
    width: 14px;
    height: 7px;
    margin: 5px 0 0 2px;
    background: linear-gradient(90deg, #5cc1fb 0 40%, transparent 40% 65%, #e4e4e4 65%);
}

.thumb-b {
    width: 59px;
    height: 66px;
    margin-top: -5px;
    background: #2e2e2e;
}

.thumb-c {
    width: 65px;
    height: 32px;
    margin-top: 12px;
    background: #232323;
}

.thumb-d {
    width: 66px;
    height: 48px;
    margin-top: 4px;
    background: #151619;
}

.thumb-e {
    width: 65px;
    height: 42px;
    margin-top: 7px;
    background: #2b2c33;
}

.thumb-list {
    flex: 1;
    background: repeating-linear-gradient(#6b6b6b 0 1px, transparent 1px 4px);
    opacity: .6;
}

.thumb-b .thumb-side {
    width: 14px;
    background: repeating-linear-gradient(#7a7a7a 0 1px, transparent 1px 6px);
}

.thumb-b .thumb-list {
    background: repeating-linear-gradient(#8f8f8f 0 1px, transparent 1px 3px);
}

.thumb-d .thumb-side {
    width: 12px;
    background: linear-gradient(transparent 60%, #3b6d8f 60% 66%, transparent 66%), repeating-linear-gradient(#4a4a4a 0 1px, transparent 1px 4px);
}

.thumb-swatches {
    width: 18px;
    background: linear-gradient(#8a5cb0 0 8px, transparent 8px), repeating-linear-gradient(#cfd6c0 0 4px, #34363d 4px 7px);
}

.mini-icon {
    position: absolute;
    left: 47px;
    top: 38px;
}

.trash {
    flex: none;
    margin-top: -5px;
}

.cal-month {
    font-family: "Liberation Sans", sans-serif;
    font-size: 11px;
    font-weight: 700;
    fill: #fff;
}

.cal-day {
    font-family: "Liberation Sans", sans-serif;
    font-size: 32px;
    fill: #222;
}

.tv-text {
    font-family: "Liberation Sans", sans-serif;
    font-size: 24px;
    font-weight: 700;
    fill: #f2f2f2;
}

.translate-a {
    font-family: "Liberation Sans", sans-serif;
    font-size: 12px;
    fill: #e2e1df;
}
```
